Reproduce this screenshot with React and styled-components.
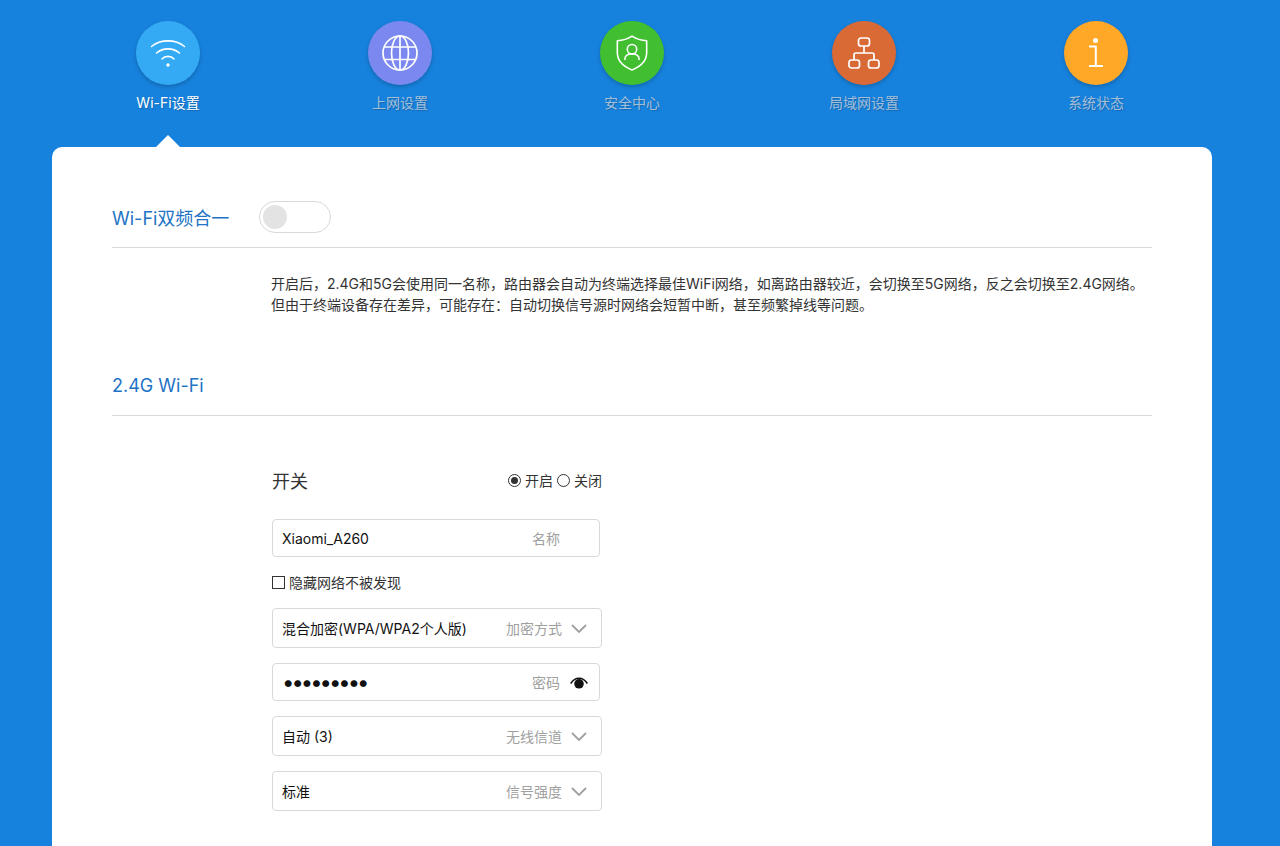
import React from "react";
import styled, { createGlobalStyle } from "styled-components";

const FONT = `Inter, "Noto Sans CJK SC", "Noto Sans", sans-serif`;

const GlobalStyle = createGlobalStyle`
  html, body {
    margin: 0;
    padding: 0;
    height: 846px;
    overflow: hidden;
    background: #1782dd;
    font-family: ${FONT};
    color: #333;
  }
  * {
    box-sizing: border-box;
  }
`;

const WifiIcon = () => (
  <svg width="36" height="30" viewBox="0 0 36 30" fill="none" stroke="#fff" strokeWidth="1.6" strokeLinecap="round">
    <path d="M1.5 8.500C10.500 1 25.500 1 34.500 8.500" />
    <path d="M6.500 15C13 9.500 23 9.500 29.500 15" />
    <path d="M12 21C15 17.500 21 17.500 24 21" />
    <circle cx="18" cy="27" r="1.700" fill="#fff" stroke="none" />
  </svg>
);

const GlobeIcon = () => (
  <svg width="36" height="36" viewBox="0 0 36 36" fill="none" stroke="#fff" strokeWidth="1.7">
    <circle cx="18" cy="18" r="17" />
    <ellipse cx="18" cy="18" rx="8.500" ry="17" />
    <path d="M18 1V35M2.200 12H33.800M2.200 24.500H33.800" />
  </svg>
);

const ShieldIcon = () => (
  <svg width="32" height="36" viewBox="0 0 34 38" fill="none" stroke="#fff" strokeWidth="1.7" strokeLinejoin="round">
    <path d="M17 1C22 4.200 27 5.600 32.600 6V18.500C32.600 27 26 33.500 17 37C8 33.500 1.400 27 1.400 18.500V6C7 5.600 12 4.200 17 1Z" />
    <circle cx="17" cy="15" r="5" />
    <path d="M9.500 26.500V25.500C9.500 22 12 20 17 20C22 20 24.500 22 24.500 25.500V26.500" />
  </svg>
);

const NetworkIcon = () => (
  <svg width="32" height="32" viewBox="0 0 32 32" fill="none" stroke="#fff" strokeWidth="1.7">
    <rect x="10.500" y="1" width="11" height="8" rx="2.500" />
    <rect x="1" y="23" width="10.500" height="8" rx="2.500" />
    <rect x="20.500" y="23" width="10.500" height="8" rx="2.500" />
    <path d="M16 9V16M6 23V18C6 16.900 6.900 16 8 16H24C25.100 16 26 16.900 26 18V23" />
  </svg>
);

const InfoIcon = () => (
  <svg width="14" height="30" viewBox="0 0 14 30" fill="none">
    <circle cx="6.500" cy="2.500" r="2.500" fill="#fff" />
    <path d="M0 8.500H6.800V28M0 28H14" stroke="#fff" strokeWidth="2" />
  </svg>
);

const Chevron = () => (
  <svg width="16" height="9" viewBox="0 0 16 9" fill="none" stroke="#a0a0a0" strokeWidth="1.8">
    <path d="M1 1L8 8L15 1" />
  </svg>
);

const EyeIcon = () => (
  <svg width="18" height="14" viewBox="0 0 18 14" fill="none">
    <path d="M0.700 8.500C5 1.500 13 1.500 17.300 8.500" stroke="#111" strokeWidth="1.600" />
    <circle cx="9" cy="8.800" r="4.800" fill="#111" />
  </svg>
);

const Nav = styled.nav`
  display: grid;
  grid-template-columns: repeat(5, 232px);
  width: 1160px;
  height: 147px;
  margin-left: 52px;
`;

const NavItem = styled.a`
  position: relative;
  display: flex;
  flex-direction: column;
  align-items: center;
  padding-top: 21px;
  font-size: 14px;
  line-height: 20px;
  color: ${(p) => (p.$active ? "#fff" : "#a6bfd8")};
  text-shadow: 1px 1px 1px rgba(0, 0, 0, 0.2);

  ${(p) =>
    p.$active &&
    `
    &::after {
      content: "";
      position: absolute;
      left: 104px;
      bottom: 0;
      width: 0;
      height: 0;
      border-left: 12px solid transparent;
      border-right: 12px solid transparent;
      border-bottom: 12px solid #fff;
    }
  `}
`;

const NavCircle = styled.span`
  display: flex;
  align-items: center;
  justify-content: center;
  width: 64px;
  height: 64px;
  margin-bottom: 8px;
  border-radius: 50%;
  background: ${(p) => p.$color};
  box-shadow: 0 2px 4px rgba(0, 0, 0, 0.2);
`;

const Card = styled.main`
  width: 1160px;
  height: 699px;
  margin-left: 52px;
  padding: 0 60px;
  overflow: hidden;
  background: #fff;
  border-radius: 10px 10px 0 0;
`;

const SectionHead = styled.div`
  display: flex;
  align-items: center;
  height: ${(p) => p.$height}px;
  padding-top: ${(p) => p.$top}px;
  border-bottom: 1px solid #d9d9d9;
  gap: 30px;
`;

const SectionTitle = styled.h2`
  margin: 0;
  font-size: 18px;
  font-weight: 400;
  color: #2273c5;
`;

const Toggle = styled.span`
  display: flex;
  align-items: center;
  width: 72px;
  height: 32px;
  padding-left: 3px;
  border: 1px solid #d9d9d9;
  border-radius: 16px;

  &::before {
    content: "";
    width: 24px;
    height: 24px;
    border-radius: 50%;
    background: #e3e3e3;
  }
`;

const Description = styled.p`
  margin: 25px 0 0 159px;
  font-size: 14px;
  line-height: 21px;
  color: #333;
`;

const Form = styled.form`
  display: flex;
  flex-direction: column;
  width: 330px;
  margin-left: 160px;
  padding-top: 51px;
`;

const SwitchRow = styled.div`
  display: flex;
  align-items: center;
  justify-content: space-between;
  width: 330px;
  height: 26px;
  margin-bottom: 26px;
  font-size: 18px;
`;

const RadioGroup = styled.div`
  display: flex;
  align-items: center;
  font-size: 14px;
`;

const Radio = styled.span`
  display: flex;
  align-items: center;
  justify-content: center;
  width: 13px;
  height: 13px;
  margin: 0 4px 0 ${(p) => (p.$first ? 0 : 4)}px;
  border: 1px solid #333;
  border-radius: 50%;

  &::after {
    content: "";
    display: ${(p) => (p.$checked ? "block" : "none")};
    width: 7px;
    height: 7px;
    border-radius: 50%;
    background: #333;
  }
`;

const Field = styled.div`
  display: flex;
  align-items: center;
  width: ${(p) => (p.$select ? 330 : 328)}px;
  height: ${(p) => (p.$select ? 40 : 38)}px;
  margin-bottom: ${(p) => p.$gap}px;
  padding: 0 ${(p) => (p.$select ? 14 : 11)}px 0 9px;
  border: 1px solid #d9d9d9;
  border-radius: 4px;
`;

const FieldValue = styled.input`
  flex: 1;
  min-width: 0;
  height: 100%;
  padding: 0;
  border: 0;
  outline: 0;
  background: none;
  color: #111;
  font-family: ${FONT};
  font-size: ${(p) => (p.type === "password" ? 22 : 14)}px;
  letter-spacing: ${(p) => (p.type === "password" ? "-3px" : 0)};
`;

const SelectValue = styled.span`
  flex: 1;
  font-size: 14px;
  color: #111;
`;

const FieldLabel = styled.span`
  margin-right: ${(p) => p.$gap}px;
  font-size: 14px;
  color: #a0a0a0;
`;

const CheckRow = styled.label`
  display: flex;
  align-items: center;
  height: 20px;
  margin-bottom: 16px;
  font-size: 14px;
  color: #333;
`;

const Box = styled.span`
  width: 13px;
  height: 13px;
  margin-right: 4px;
  border: 1px solid #333;
`;

const navItems = [
  { label: "Wi-Fi设置", color: "#34aaf4", icon: <WifiIcon />, active: true },
  { label: "上网设置", color: "#7b88f0", icon: <GlobeIcon /> },
  { label: "安全中心", color: "#42bf30", icon: <ShieldIcon /> },
  { label: "局域网设置", color: "#d96a35", icon: <NetworkIcon /> },
  { label: "系统状态", color: "#ffa726", icon: <InfoIcon /> },
];

const App = () => (
  <>
    <GlobalStyle />
    <Nav>
      {navItems.map((item) => (
        <NavItem key={item.label} $active={item.active}>
          <NavCircle $color={item.color}>{item.icon}</NavCircle>
          {item.label}
        </NavItem>
      ))}
    </Nav>
    <Card>
      <SectionHead $height={101} $top={40}>
        <SectionTitle>Wi-Fi双频合一</SectionTitle>
        <Toggle />
      </SectionHead>
      <Description>
        开启后，2.4G和5G会使用同一名称，路由器会自动为终端选择最佳WiFi网络，如离路由器较近，会切换至5G网络，反之会切换至2.4G网络。
        <br />
        但由于终端设备存在差异，可能存在：自动切换信号源时网络会短暂中断，甚至频繁掉线等问题。
      </Description>
      <SectionHead $height={101} $top={40}>
        <SectionTitle>2.4G Wi-Fi</SectionTitle>
      </SectionHead>
      <Form>
        <SwitchRow>
          开关
          <RadioGroup>
            <Radio $first $checked />
            开启
            <Radio />
            关闭
          </RadioGroup>
        </SwitchRow>
        <Field $gap={15}>
          <FieldValue type="text" readOnly value="Xiaomi_A260" />
          <FieldLabel $gap={28}>名称</FieldLabel>
        </Field>
        <CheckRow>
          <Box />
          隐藏网络不被发现
        </CheckRow>
        <Field $select $gap={15}>
          <SelectValue>混合加密(WPA/WPA2个人版)</SelectValue>
          <FieldLabel $gap={9}>加密方式</FieldLabel>
          <Chevron />
        </Field>
        <Field $gap={15}>
          <FieldValue type="password" readOnly value="123456789" />
          <FieldLabel $gap={10}>密码</FieldLabel>
          <EyeIcon />
        </Field>
        <Field $select $gap={15}>
          <SelectValue>自动 (3)</SelectValue>
          <FieldLabel $gap={9}>无线信道</FieldLabel>
          <Chevron />
        </Field>
        <Field $select $gap={15}>
          <SelectValue>标准</SelectValue>
          <FieldLabel $gap={9}>信号强度</FieldLabel>
          <Chevron />
        </Field>
      </Form>
    </Card>
  </>
);

export default App;
